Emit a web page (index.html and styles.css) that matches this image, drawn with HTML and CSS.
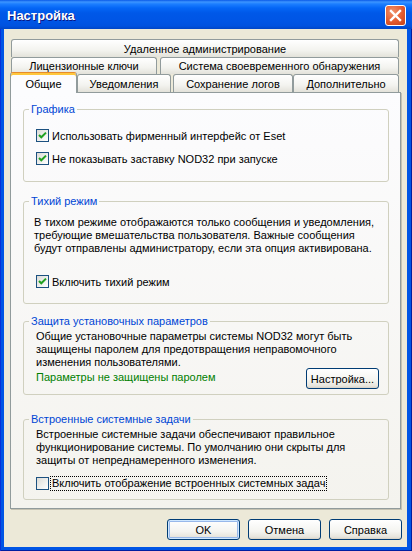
FILE: index.html
```html
<!DOCTYPE html>
<html lang="ru">
<head>
  <meta charset="UTF-8">
  <title>Настройка</title>
  <link rel="stylesheet" href="styles.css">
</head>
<body>

<div class="window">
  <div class="titlebar">
    <span class="title">Настройка</span>
    <span class="close">
      <svg width="19" height="19" viewBox="0 0 19 19">
        <path d="M5 5 L14 14 M14 5 L5 14" stroke="#fff" stroke-width="2.4" stroke-linecap="square"/>
      </svg>
    </span>
  </div>

  <div class="client">
    <div class="tabs">
      <div class="tab-row">
        <div class="tab grow">Удаленное администрирование</div>
      </div>
      <div class="tab-row row2">
        <div class="tab lic">Лицензионные ключи</div>
        <div class="tab grow">Система своевременного обнаружения</div>
      </div>
      <div class="tab-row row3">
        <div class="tab active">Общие</div>
        <div class="tab notify">Уведомления</div>
        <div class="tab logs">Сохранение логов</div>
        <div class="tab grow">Дополнительно</div>
      </div>
    </div>

    <div class="panel">
      <fieldset class="group g1">
        <legend>Графика</legend>
        <div class="check first"><span class="box on"><svg width="11" height="11" viewBox="0 0 11 11"><path d="M2 5 L4.3 7.3 L9 2.6" fill="none" stroke="#21a121" stroke-width="2"/></svg></span>Использовать фирменный интерфейс от Eset</div>
        <div class="check second"><span class="box on"><svg width="11" height="11" viewBox="0 0 11 11"><path d="M2 5 L4.3 7.3 L9 2.6" fill="none" stroke="#21a121" stroke-width="2"/></svg></span>Не показывать заставку NOD32 при запуске</div>
      </fieldset>

      <fieldset class="group g2">
        <legend>Тихий режим</legend>
        <p class="text">В тихом режиме отображаются только сообщения и уведомления,<br>требующие вмешательства пользователя. Важные сообщения<br>будут отправлены администратору, если эта опция активирована.</p>
        <div class="check"><span class="box on"><svg width="11" height="11" viewBox="0 0 11 11"><path d="M2 5 L4.3 7.3 L9 2.6" fill="none" stroke="#21a121" stroke-width="2"/></svg></span>Включить тихий режим</div>
      </fieldset>

      <fieldset class="group g3">
        <legend>Защита установочных параметров</legend>
        <p class="text">Общие установочные параметры системы NOD32 могут быть<br>защищены паролем для предотвращения неправомочного<br>изменения пользователями.</p>
        <div class="status-row">
          <span class="status">Параметры не защищены паролем</span>
          <button class="btn">Настройка...</button>
        </div>
      </fieldset>

      <fieldset class="group g4">
        <legend>Встроенные системные задачи</legend>
        <p class="text">Встроенные системные задачи обеспечивают правильное<br>функционирование системы. По умолчанию они скрыты для<br>защиты от непреднамеренного изменения.</p>
        <div class="check"><span class="box"></span><span class="focus">Включить отображение встроенных системных задач</span></div>
      </fieldset>
    </div>

    <div class="actions">
      <button class="btn default">OK</button>
      <button class="btn">Отмена</button>
      <button class="btn">Справка</button>
    </div>
  </div>
</div>

</body>
</html>
```

FILE: styles.css
```css
body { margin: 0; font-family: Tahoma, "Liberation Sans", sans-serif; font-size: 11px; color: #000; background: #0a246a; }

.window { width: 412px; height: 551px; display: flex; flex-direction: column; background: #0055e5; box-shadow: inset 1px 0 #0831d9, inset -1px 0 #001ea0, inset 0 -1px #001ea0; }

.titlebar { height: 29px; flex: none; display: flex; align-items: center; justify-content: space-between; padding: 0 6px 0 7px;
  background: linear-gradient(to bottom, #0a5ae8 0, #3d95ff 2px, #1c7eff 4px, #0466f6 8px, #0058e8 13px, #0055e5 21px, #0052df 26px, #0045c6 29px); }
.title { color: #fff; font-family: "Liberation Sans", sans-serif; font-weight: bold; font-size: 13px; text-shadow: 1px 1px #0a1883; margin-top: 1px; }
.close { width: 19px; height: 19px; border: 1px solid #fff; border-radius: 3px; display: flex; margin-top: 1px;
  background: radial-gradient(circle at 35% 30%, #f0926c 0, #e35a2e 55%, #c3411a 100%); }

.client { flex: 1; margin: 0 5px 4px 4px; background: #ece9d8; padding: 10px 0 7px; }

/* вкладки */
.tabs { margin: 0 6px; }
.tab-row { display: flex; height: 18px; padding: 0 2px 0 1px; }
.tab-row.row2 { height: 17px; gap: 3px; }
.tab-row.row3 { align-items: flex-end; }
.tab { box-sizing: border-box; height: 100%; display: flex; align-items: center; justify-content: center; white-space: nowrap;
  border: 1px solid #919b9c; border-bottom: none; border-radius: 3px 3px 0 0;
  background: linear-gradient(to bottom, #ffffff, #f3f3ef 60%, #e3e2da); }
.tab.grow { flex: 1; }
.tab.lic { width: 146px; }
.tab.notify { width: 94px; margin-right: 2px; }
.tab.logs { width: 120px; }
.tab.active { position: relative; z-index: 1; width: 67px; height: 21px; margin: 0 0 -1px -1px; padding-top: 1px;
  border-top-color: #e68b2c; box-shadow: inset 0 2px 0 #ffc73c; background: #fcfcfe; }

.panel { margin: 0 6px; border: 1px solid #919b9c; padding: 0 11px 8px 12px; box-shadow: 1px 1px 0 #c5c2b2;
  background: linear-gradient(to bottom, #fcfcfe, #f4f3ee); }

.group { margin: 0; padding: 0 12px; border: 1px solid #d0d0bf; border-radius: 3px; min-width: 0; }
.group legend { padding: 0 2px; margin-left: -7px; line-height: 13px; color: #0046d5; }
.g1 { margin-top: 10px; padding-bottom: 16px; }
.g2 { margin-top: 13px; padding-bottom: 15px; }
.g3 { margin-top: 11px; padding: 0 9px 5px 12px; }
.g4 { margin-top: 18px; padding-bottom: 9px; }

.text { margin: 2px 0 0; line-height: 13px; white-space: nowrap; }
.g2 .text { margin: 8px 0 0 -2px; }

.check { display: flex; align-items: center; height: 13px; white-space: nowrap; margin-top: 10px; }
.g1 .check.first { margin-top: 13px; }
.g2 .check { margin-top: 20px; }
.box { box-sizing: border-box; width: 13px; height: 13px; border: 1px solid #1c5180; margin-right: 3px; display: flex;
  background: linear-gradient(135deg, #dcdcd7, #ffffff); }
.focus { outline: 1px dotted #000; padding: 0 1px; margin-left: -1px; line-height: 13px; }

.status-row { display: flex; align-items: center; justify-content: space-between; margin-top: -1px; }
.status { color: #008000; line-height: 13px; margin-top: -2px; }

.btn { box-sizing: border-box; width: 73px; height: 21px; padding: 0; font: inherit; color: #000; border: 1px solid #003c74; border-radius: 3px;
  background: linear-gradient(to bottom, #ffffff, #f4f4f0 60%, #e6e4dc 90%, #d6d0c5); }
.btn.default { box-shadow: inset 0 0 0 1px #cee7ff, inset 0 0 0 2px #98b8ea; }

.actions { display: flex; justify-content: flex-end; gap: 8px; margin-top: 10px; padding-right: 5px; }
```
